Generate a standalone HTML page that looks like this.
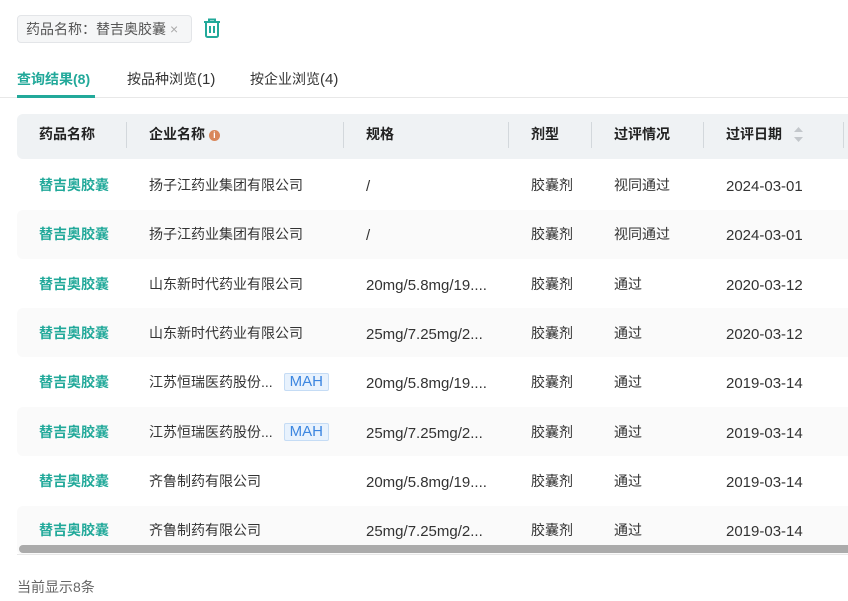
<!DOCTYPE html>
<html><head><meta charset="utf-8"><style>
*{margin:0;padding:0;box-sizing:border-box}
body{width:848px;height:601px;overflow:hidden;background:#fff;font-family:"Liberation Sans","Noto Sans CJK SC",sans-serif;font-size:14px;color:#333;position:relative}
.abs{position:absolute}
.tag{left:17px;top:15px;width:175px;height:28px;background:#f5f6f7;border:1px solid #e3e5e8;border-radius:4px;font-size:14px;color:#555;line-height:26px;padding-left:8px}
.tag span{color:#aaa;margin-left:4px}
.tab{top:69px;font-size:14px;color:#333;line-height:20px}
.hd{left:17px;top:114px;width:840px;height:45px;background:#eff2f4;border-radius:6px}
.th{top:124px;font-weight:bold;font-size:14px;color:#222;line-height:20px}
.dv{top:122px;width:1px;height:26px;background:#d3d8dc}
.row{left:17px;width:840px;height:49px;border-radius:6px}
.c{font-size:14px;color:#333;white-space:nowrap;line-height:20px}
.n{font-size:15px;padding-top:2px}
.g{color:#22a99a;font-weight:bold}
.mah{display:inline-block;border:1px solid #c5dcf5;background:#e8f2fd;color:#3c86e0;font-size:15px;line-height:16px;padding:0 5px;border-radius:2px;margin-left:11px;vertical-align:1px}
</style></head><body>
<div class="abs tag">药品名称：替吉奥胶囊<span>×</span></div>
<svg class="abs" style="left:203px;top:18px" width="18" height="20" viewBox="0 0 18 20" fill="none" stroke="#22a99a" stroke-width="2"><path d="M1 4h16M6 4V1.5h6V4M3 4v13.5a1.5 1.5 0 0 0 1.5 1.5h9a1.5 1.5 0 0 0 1.5-1.5V4M7 8v7M11 8v7"/></svg>
<div class="abs tab" style="left:17px;color:#22a99a;font-weight:bold">查询结果(8)</div>
<div class="abs tab" style="left:127px">按品种浏览<span style="font-size:15px">(1)</span></div>
<div class="abs tab" style="left:250px">按企业浏览<span style="font-size:15px">(4)</span></div>
<div class="abs" style="left:0;top:97px;width:848px;height:1px;background:#e8e8e8"></div>
<div class="abs" style="left:17px;top:95px;width:78px;height:3px;background:#22a99a"></div>
<div class="abs hd"></div>
<div class="abs th" style="left:39px">药品名称</div>
<div class="abs th" style="left:149px">企业名称 <span style="display:inline-block;width:11px;height:11px;border-radius:50%;background:#d9875a;color:#fff;font-size:9px;line-height:11px;text-align:center;vertical-align:1px">i</span></div>
<div class="abs th" style="left:366px">规格</div>
<div class="abs th" style="left:531px">剂型</div>
<div class="abs th" style="left:614px">过评情况</div>
<div class="abs th" style="left:726px">过评日期</div>
<svg class="abs" style="left:793px;top:126px" width="11" height="17" viewBox="0 0 11 17"><path d="M5.5 1L10 6H1z M5.5 16L10 11H1z" fill="#c3c7cb"/></svg>
<div class="abs dv" style="left:126px"></div><div class="abs dv" style="left:343px"></div><div class="abs dv" style="left:508px"></div><div class="abs dv" style="left:591px"></div><div class="abs dv" style="left:703px"></div><div class="abs dv" style="left:843px"></div>
<div class="abs row" style="top:210px;background:#fafafa"></div>
<div class="abs row" style="top:308px;background:#fafafa"></div>
<div class="abs row" style="top:407px;background:#fafafa"></div>
<div class="abs row" style="top:506px;background:#fafafa"></div>
<div id="rows"></div>
<script>
var d=[["扬子江药业集团有限公司","/","视同通过","2024-03-01",0],["扬子江药业集团有限公司","/","视同通过","2024-03-01",0],["山东新时代药业有限公司","20mg/5.8mg/19....","通过","2020-03-12",0],["山东新时代药业有限公司","25mg/7.25mg/2...","通过","2020-03-12",0],["江苏恒瑞医药股份...","20mg/5.8mg/19....","通过","2019-03-14",1],["江苏恒瑞医药股份...","25mg/7.25mg/2...","通过","2019-03-14",1],["齐鲁制药有限公司","20mg/5.8mg/19....","通过","2019-03-14",0],["齐鲁制药有限公司","25mg/7.25mg/2...","通过","2019-03-14",0]];
var h="";d.forEach(function(r,i){var y=175+i*49.3;
h+='<div class="abs c g" style="left:39px;top:'+y+'px">替吉奥胶囊</div><div class="abs c" style="left:149px;top:'+y+'px">'+r[0]+(r[4]?'<span class="mah">MAH</span>':'')+'</div><div class="abs c n" style="left:366px;top:'+y+'px">'+r[1]+'</div><div class="abs c" style="left:531px;top:'+y+'px">胶囊剂</div><div class="abs c" style="left:614px;top:'+y+'px">'+r[2]+'</div><div class="abs c n" style="left:726px;top:'+y+'px">'+r[3]+'</div>';});
document.getElementById("rows").innerHTML=h;
</script>
<div class="abs" style="left:19px;top:545px;width:835px;height:8px;background:#ababab;border-radius:4px"></div>
<div class="abs" style="left:17px;top:554px;width:831px;height:1px;background:#e8e8e8"></div>
<div class="abs" style="left:17px;top:577px;font-size:14px;color:#666;line-height:20px">当前显示8条</div>
</body></html>
